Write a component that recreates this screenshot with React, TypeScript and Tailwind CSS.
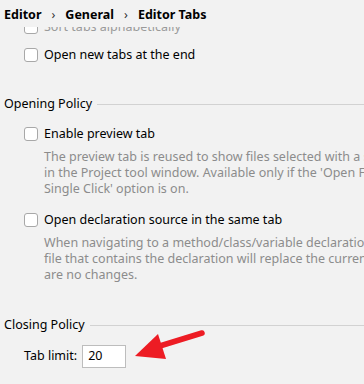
import React from "react";

const font = { fontFamily: '"Noto Sans", "Noto Sans CJK SC", sans-serif' };

function Checkbox() {
    return <div className="w-[14px] h-[14px] shrink-0 rounded-[3px] border border-[#a8a8a8] bg-white" />;
}

function CheckRow({ label, muted }: { label: string; muted?: boolean }) {
    return (
        <div className="h-[28px] flex items-center pl-[24px] gap-[6px]">
            <Checkbox />
            <span className={muted ? "text-[#9a9a9a]" : "text-black"}>{label}</span>
        </div>
    );
}

function SectionTitle({ title }: { title: string }) {
    return (
        <div className="h-[20px] flex items-center pl-[4px] gap-[5px]">
            <span className="whitespace-nowrap">{title}</span>
            <div className="flex-1 h-px bg-[#d2d2d2]" />
        </div>
    );
}

function Description({ lines }: { lines: string[] }) {
    return (
        <div className="pl-[44px] text-[#8c8c8c] leading-[16px]">
            {lines.map((l, i) => (
                <div key={i} className="whitespace-nowrap h-[16px]">{l}</div>
            ))}
        </div>
    );
}

export default function App() {
    return (
        <div style={font} className="relative w-[364px] h-[384px] overflow-hidden bg-[#f2f2f2] text-[12.5px] text-black flex flex-col">
            <div className="h-[27px] shrink-0 pt-[7px] pl-[4px] leading-[16px] font-bold flex gap-[10px] relative z-10 bg-[#f2f2f2]">
                <span>Editor</span>
                <span className="font-normal text-[#333]">›</span>
                <span>General</span>
                <span className="font-normal text-[#333]">›</span>
                <span>Editor Tabs</span>
            </div>
            <div className="flex-1 overflow-hidden">
                <div className="-mt-[14px] flex flex-col">
                    <CheckRow label="Sort tabs alphabetically" muted />
                    <CheckRow label="Open new tabs at the end" />
                    <div className="mt-[25px]">
                        <SectionTitle title="Opening Policy" />
                    </div>
                    <div className="mt-[6px]">
                        <CheckRow label="Enable preview tab" />
                    </div>
                    <div className="mt-[1px]">
                        <Description lines={[
                            "The preview tab is reused to show files selected with a single click",
                            "in the Project tool window. Available only if the 'Open Files with",
                            "Single Click' option is on.",
                        ]} />
                    </div>
                    <div className="mt-[9px]">
                        <CheckRow label="Open declaration source in the same tab" />
                    </div>
                    <div className="mt-[1px]">
                        <Description lines={[
                            "When navigating to a method/class/variable declaration, the",
                            "file that contains the declaration will replace the current one if there",
                            "are no changes.",
                        ]} />
                    </div>
                    <div className="mt-[32px]">
                        <SectionTitle title="Closing Policy" />
                    </div>
                    <div className="mt-[10px] h-[23px] flex items-center pl-[24px] gap-[5px]">
                        <span>Tab limit:</span>
                        <div className="w-[44px] h-[23px] border border-[#bdbdbd] bg-white flex items-center pl-[5px]">20</div>
                    </div>
                </div>
            </div>
            <svg className="absolute left-0 top-0 pointer-events-none" width="364" height="384">
                <line x1="202" y1="333" x2="150" y2="349" stroke="#ed1c24" strokeWidth="5.5" strokeLinecap="round" />
                <polygon points="135,356 158,334 166,359" fill="#ed1c24" />
            </svg>
        </div>
    );
}
